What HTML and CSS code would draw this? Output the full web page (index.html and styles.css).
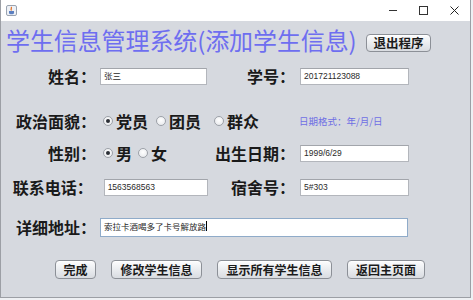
FILE: index.html
```html
<!DOCTYPE html>
<html lang="zh-CN">
<head>
    <meta charset="UTF-8">
    <meta name="viewport" content="width=device-width, initial-scale=1.0">
    <title>学生信息管理系统</title>
    <link rel="stylesheet" href="styles.css">
</head>
<body>

<div class="window">
    <!-- title bar -->
    <div class="titlebar">
        <svg class="app-icon" width="11" height="11" viewBox="0 0 11 11">
            <rect x="0.5" y="0.5" width="10" height="10" rx="1.5" fill="#eef1f6" stroke="#9aa3b0"/>
            <path d="M5 2 C6.5 3 4 4 5.5 5.5" fill="none" stroke="#e06a1a" stroke-width="1.2"/>
            <path d="M3 6 H8 V8 C8 9 7 9.3 5.5 9.3 C4 9.3 3 9 3 8 Z" fill="#5b7fc0"/>
        </svg>
        <div class="controls">
            <span class="ctl"><span class="ico-min"></span></span>
            <span class="ctl"><span class="ico-max"></span></span>
            <span class="ctl">
                <svg width="9" height="9" viewBox="0 0 9 9">
                    <path d="M0.5 0.5 L8.5 8.5 M8.5 0.5 L0.5 8.5" stroke="#222" stroke-width="1"/>
                </svg>
            </span>
        </div>
    </div>

    <div class="panel">
        <div class="header">
            <h1 class="title">学生信息管理系统(添加学生信息)</h1>
            <button class="btn btn-exit">退出程序</button>
        </div>

        <div class="row row-name">
            <span class="lbl lbl-left">姓名：</span>
            <div class="field field-name">张三</div>
            <div class="right">
                <span class="lbl lbl-right">学号：</span>
                <div class="field field-right">201721123088</div>
            </div>
        </div>

        <div class="row row-party">
            <span class="lbl lbl-left">政治面貌：</span>
            <div class="radios radios-party">
                <span class="radio checked"><i></i>党员</span>
                <span class="radio"><i></i>团员</span>
                <span class="radio"><i></i>群众</span>
            </div>
            <div class="right hint">日期格式：年/月/日</div>
        </div>

        <div class="row row-sex">
            <span class="lbl lbl-left">性别：</span>
            <div class="radios radios-sex">
                <span class="radio checked"><i></i>男</span>
                <span class="radio"><i></i>女</span>
            </div>
            <div class="right">
                <span class="lbl lbl-right">出生日期：</span>
                <div class="field field-right">1999/6/29</div>
            </div>
        </div>

        <div class="row row-phone">
            <span class="lbl lbl-left">联系电话：</span>
            <div class="field field-phone">1563568563</div>
            <div class="right">
                <span class="lbl lbl-right">宿舍号：</span>
                <div class="field field-right">5#303</div>
            </div>
        </div>

        <div class="row row-addr">
            <span class="lbl lbl-left">详细地址：</span>
            <div class="field field-addr focused">索拉卡酒喝多了卡号解放路<span class="caret"></span></div>
        </div>

        <div class="actions">
            <button class="btn btn-done">完成</button>
            <button class="btn btn-edit">修改学生信息</button>
            <button class="btn btn-all">显示所有学生信息</button>
            <button class="btn btn-home">返回主页面</button>
        </div>
    </div>
</div>

</body>
</html>
```

FILE: styles.css
```css
body {
    margin: 0;
    background-color: #eef0f3;
    font-family: "Noto Sans CJK SC", sans-serif;
}

.window {
    width: 471px;
    height: 298px;
    box-sizing: border-box;
    border: 1px solid #9c9fa5;
    border-top: none;
    display: flex;
    flex-direction: column;
    overflow: hidden;
}

/* title bar */
.titlebar {
    height: 21px;
    background-color: #fff;
    display: flex;
    align-items: flex-start;
    justify-content: space-between;
}
.app-icon {
    margin: 5px 0 0 5px;
}
.controls {
    display: flex;
}
.ctl {
    width: 31px;
    height: 21px;
    display: flex;
    align-items: center;
    justify-content: center;
}
.ico-min {
    width: 8px;
    height: 1px;
    background-color: #333;
}
.ico-max {
    width: 7px;
    height: 7px;
    border: 1px solid #333;
}

/* content */
.panel {
    flex: 1;
    background-color: #d6d9df;
}

.header {
    height: 33px;
    display: flex;
    align-items: flex-start;
}
.title {
    margin: 5px 0 0 5px;
    width: 360px;
    font-size: 24px;
    font-weight: 400;
    line-height: 28px;
    color: #6e6ef0;
    white-space: nowrap;
    letter-spacing: -0.1px;
}

.btn {
    box-sizing: border-box;
    height: 19px;
    padding: 0;
    font-family: "Noto Sans CJK SC", sans-serif;
    font-size: 12px;
    font-weight: 700;
    line-height: 17px;
    color: #1b1b1b;
    background: linear-gradient(#fdfdfe, #eceef1 45%, #d9dce1);
    border: 1px solid #8c9097;
    border-radius: 4px;
    box-shadow: inset 0 1px 0 #fff;
}
.btn-exit {
    margin-top: 13px;
    width: 65px;
    height: 18px;
    font-size: 12.5px;
    line-height: 16px;
}

.row {
    height: 20px;
    display: flex;
    align-items: center;
    padding-right: 61px;
}
.row-name { margin-top: 12px; }
.row-party { margin-top: 25px; }
.row-sex { margin-top: 12px; }
.row-phone { margin-top: 14px; }
.row-addr { margin-top: 20px; }

.lbl {
    font-size: 16px;
    font-weight: 700;
    line-height: 20px;
    color: #1a1a1a;
    white-space: nowrap;
}
.lbl-left {
    width: 95px;
    text-align: right;
}
.lbl-right {
    width: 87px;
    text-align: right;
}

.right {
    margin-left: auto;
    display: flex;
    align-items: center;
}

.field {
    box-sizing: border-box;
    height: 17px;
    padding-left: 3px;
    background-color: #fff;
    border: 1px solid #b3b6bc;
    border-top-color: #a2a5ab;
    font-family: "Liberation Sans", "Noto Sans CJK SC", sans-serif;
    font-size: 8.5px;
    line-height: 15px;
    color: #2a2a2a;
    white-space: nowrap;
}
.field-name {
    margin-left: 4px;
    width: 107px;
}
.field-right {
    margin-left: 5px;
    width: 109px;
}
.field-phone {
    margin-left: 11px;
    width: 108px;
}
.field-addr {
    margin-left: 4px;
    width: 308px;
    height: 19px;
    line-height: 17px;
}
.field.focused {
    border-color: #8fabc9;
}
.caret {
    display: inline-block;
    width: 1px;
    height: 10px;
    background-color: #000;
    vertical-align: -1px;
}

.radios {
    display: flex;
    align-items: center;
    margin-left: 7px;
}
.radio {
    display: flex;
    align-items: center;
    font-size: 16px;
    font-weight: 700;
    line-height: 20px;
    color: #1a1a1a;
}
.radio i {
    box-sizing: border-box;
    width: 10px;
    height: 10px;
    margin-right: 3px;
    border: 1px solid #9da1a8;
    border-radius: 50%;
    background: radial-gradient(circle at 50% 40%, #ffffff, #e3e5e9);
    display: flex;
    align-items: center;
    justify-content: center;
}
.radio.checked i::after {
    content: "";
    width: 4px;
    height: 4px;
    border-radius: 50%;
    background-color: #2b2f36;
}
.radios-party .radio:nth-child(2) { margin-left: 8px; }
.radios-party .radio:nth-child(3) { margin-left: 13px; }
.radios-sex .radio:nth-child(2) { margin-left: 6px; }

.hint {
    width: 110px;
    font-size: 9.5px;
    line-height: 20px;
    color: #6f6fe4;
    white-space: nowrap;
}

.actions {
    margin-top: 23px;
    padding-left: 54px;
    display: flex;
    gap: 15px;
}
.btn-done { width: 41px; }
.btn-edit { width: 91px; }
.btn-all { width: 115px; }
.btn-home { width: 78px; }
```
